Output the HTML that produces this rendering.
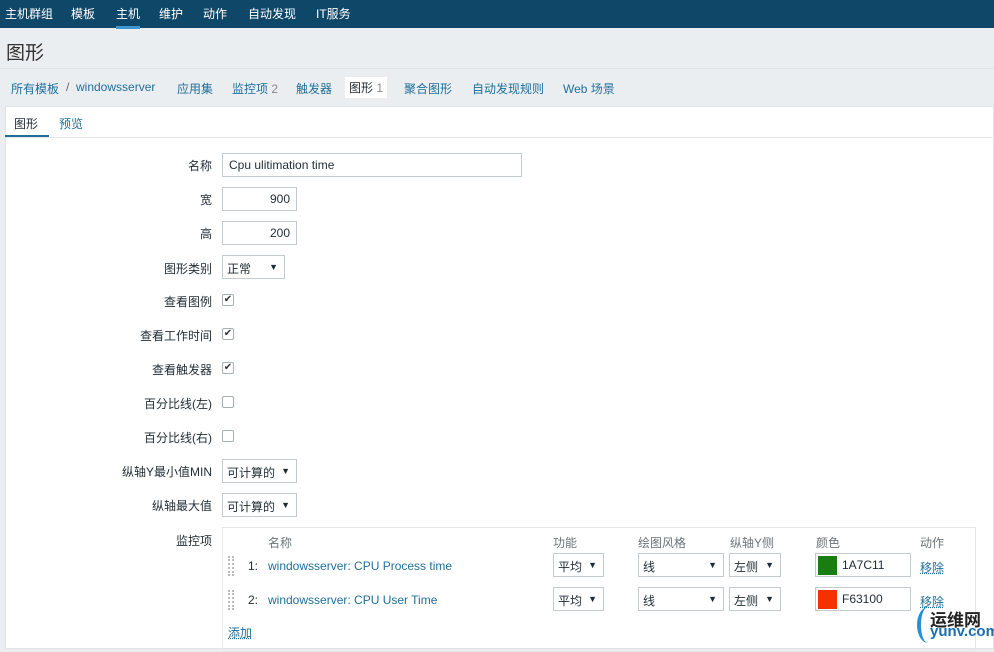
<!DOCTYPE html>
<html><head><meta charset="utf-8"><style>
*{box-sizing:border-box;margin:0;padding:0}
body{width:994px;height:649px;overflow:hidden;background:#ebeef0;font-family:"Liberation Sans","Noto Sans CJK SC",sans-serif;font-size:12px;color:#1f2c33;position:relative}
.top{height:28px;background:#0e4768;position:relative}
.top span{position:absolute;top:5px;color:#fff;font-size:12px}
.top .act{border-bottom:3px solid #3e97d1;padding-bottom:4px}
h1{position:absolute;left:6px;top:38px;font-size:19px;font-weight:normal;color:#333}
.hr{position:absolute;left:0;right:0;top:68px;border-top:1px solid #dde2e5}
.nav>span{position:absolute;top:80px;color:#1f6f9a;font-size:12px}
.nav i{font-style:normal;color:#888}
.box{position:absolute;left:5px;right:0;top:106px;bottom:0;background:#fff;border:1px solid #dfe4e7}
.tab{position:absolute;top:115px;font-size:12px}
.lbl{position:absolute;right:782px;font-size:12px;color:#1f2c33;white-space:nowrap}
.in{position:absolute;left:222px;height:24px;border:1px solid #c4cacd;background:#fff;font-size:12px;padding:4px 6px}
.cb{position:absolute;left:222px;width:12px;height:12px;border:1px solid #a8b0b4;border-radius:2px;background:#fff;font-size:10px;line-height:10px;text-align:center;color:#333}
.sel{position:absolute;height:24px;border:1px solid #c4cacd;background:#fff;font-size:12px;padding:4px 4px}
.sel:after{content:"▼";position:absolute;right:6px;top:6px;font-size:9px}
.lnk{color:#1f6f9a}
.h{position:absolute;top:534px;color:#6b7478}
</style></head><body>
<div class="top">
<span style="left:5px">主机群组</span><span style="left:71px">模板</span><span style="left:116px" class="act">主机</span><span style="left:159px">维护</span><span style="left:203px">动作</span><span style="left:248px">自动发现</span><span style="left:316px">IT服务</span>
</div>
<h1>图形</h1>
<div class="hr"></div>
<div class="nav">
<span style="left:11px">所有模板</span><span style="left:66px;color:#666">/</span><span style="left:76px">windowsserver</span><span style="left:177px">应用集</span><span style="left:232px">监控项 <i>2</i></span><span style="left:296px">触发器</span>
<span style="left:345px;top:77px;background:#fff;padding:2px 4px;color:#1f2c33">图形 <i>1</i></span>
<span style="left:404px">聚合图形</span><span style="left:472px">自动发现规则</span><span style="left:563px">Web 场景</span>
</div>
<div class="box"></div>
<div class="tab" style="left:14px">图形</div><div style="position:absolute;left:5px;top:135px;width:44px;height:3px;background:#1f6f9a"></div>
<div class="tab lnk" style="left:59px">预览</div>
<div style="position:absolute;left:5px;right:0;top:137px;border-top:1px solid #e3e7e9"></div>

<div class="lbl" style="top:157px">名称</div><div class="in" style="top:153px;width:300px">Cpu ulitimation time</div>
<div class="lbl" style="top:191px">宽</div><div class="in" style="top:187px;width:75px;text-align:right">900</div>
<div class="lbl" style="top:225px">高</div><div class="in" style="top:221px;width:75px;text-align:right">200</div>
<div class="lbl" style="top:260px">图形类别</div><div class="sel" style="left:222px;top:255px;width:63px">正常</div>
<div class="lbl" style="top:293px">查看图例</div><div class="cb" style="top:294px">✔</div>
<div class="lbl" style="top:327px">查看工作时间</div><div class="cb" style="top:328px">✔</div>
<div class="lbl" style="top:361px">查看触发器</div><div class="cb" style="top:362px">✔</div>
<div class="lbl" style="top:395px">百分比线(左)</div><div class="cb" style="top:396px"></div>
<div class="lbl" style="top:429px">百分比线(右)</div><div class="cb" style="top:430px"></div>
<div class="lbl" style="top:463px">纵轴Y最小值MIN</div><div class="sel" style="left:222px;top:459px;width:75px">可计算的</div>
<div class="lbl" style="top:497px">纵轴最大值</div><div class="sel" style="left:222px;top:493px;width:75px">可计算的</div>
<div class="lbl" style="top:532px">监控项</div>

<div style="position:absolute;left:222px;top:527px;width:754px;height:125px;border:1px solid #e3e7e9"></div>
<div class="h" style="left:268px">名称</div><div class="h" style="left:553px">功能</div><div class="h" style="left:638px">绘图风格</div><div class="h" style="left:730px">纵轴Y侧</div><div class="h" style="left:816px">颜色</div><div class="h" style="left:920px">动作</div>

<div style="position:absolute;left:228px;top:556px;width:6px;height:20px;border-left:2px dotted #bbb;border-right:2px dotted #bbb"></div>
<div style="position:absolute;left:248px;top:559px">1:</div><div class="lnk" style="position:absolute;left:268px;top:559px">windowsserver: CPU Process time</div>
<div class="sel" style="left:553px;top:553px;width:51px">平均</div><div class="sel" style="left:638px;top:553px;width:86px">线</div><div class="sel" style="left:729px;top:553px;width:52px">左侧</div>
<div class="in" style="left:815px;top:553px;width:96px;padding-left:26px">1A7C11</div><div style="position:absolute;left:818px;top:556px;width:19px;height:19px;background:#1a7c11"></div>
<div class="lnk" style="position:absolute;left:920px;top:559px;text-decoration:underline dotted">移除</div>

<div style="position:absolute;left:228px;top:590px;width:6px;height:20px;border-left:2px dotted #bbb;border-right:2px dotted #bbb"></div>
<div style="position:absolute;left:248px;top:593px">2:</div><div class="lnk" style="position:absolute;left:268px;top:593px">windowsserver: CPU User Time</div>
<div class="sel" style="left:553px;top:587px;width:51px">平均</div><div class="sel" style="left:638px;top:587px;width:86px">线</div><div class="sel" style="left:729px;top:587px;width:52px">左侧</div>
<div class="in" style="left:815px;top:587px;width:96px;padding-left:26px">F63100</div><div style="position:absolute;left:818px;top:590px;width:19px;height:19px;background:#f63100"></div>
<div class="lnk" style="position:absolute;left:920px;top:593px;text-decoration:underline dotted">移除</div>

<div class="lnk" style="position:absolute;left:228px;top:624px;text-decoration:underline dotted">添加</div>

<div style="position:absolute;left:930px;top:606px;font-size:17px;color:#222;font-weight:bold">运维网</div>
<div style="position:absolute;left:930px;top:623px;font-size:15px;color:#1a6fb0;font-weight:bold">yunv.com</div>
<div style="position:absolute;left:917px;top:607px;width:22px;height:36px;border-left:4px solid #2a8fd6;border-radius:50%"></div>
</body></html>
